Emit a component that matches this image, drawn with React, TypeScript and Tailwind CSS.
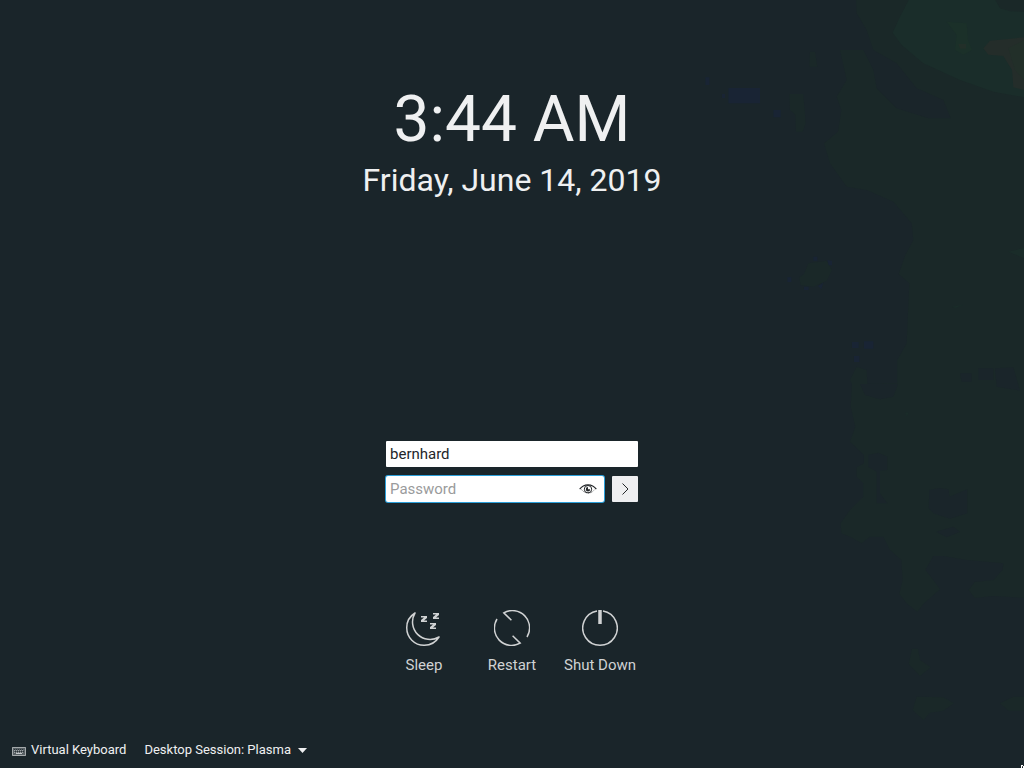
import type { ReactNode } from "react";

function Wallpaper() {
  return (
    <svg
      className="pointer-events-none absolute inset-0 h-full w-full"
      viewBox="0 0 1024 768"
      preserveAspectRatio="xMaxYMin slice"
      aria-hidden="true"
    >
      <g transform="translate(680 0) scale(0.33333)">
        <path
          fill="#1a2828"
          d="M528 0H1032V1794L940 1788L884 1794L866 1770L884 1746L940 1740L968 1710L970 1690L860 1680L790 1668H760L736 1710L760 1740L780 1768L730 1812L712 1836L680 1810L658 1782L668 1740L664 1680L630 1650L610 1610H570L545 1630L510 1610L484 1600L482 1570L510 1530L550 1490V1450L530 1430V1402L552 1390V1365L510 1325L526 1280L512 1220L516 1152L510 1140L530 1100L560 1110L562 1152L652 1150V1080L680 1030L688 850L656 822L676 765L700 720L695 670L640 605L560 570L500 560L450 490L432 430L474 395L484 330L470 290L500 240L480 150L550 150L580 210L590 265L650 325L745 355L812 355L790 300L710 265L650 190L580 150L560 90L530 40Z"
        />
        <path fill="#1a2d2a" d="M686 0H946L960 25L990 34L1032 35V292L940 275L840 240L730 190L665 135L638 98L660 50Z" />
        <path fill="#1b3029" d="M800 65L860 70L864 120L876 150L850 164L825 150L830 105Z" />
        <path fill="#242d2a" d="M910 145L930 122L1032 112V270L1000 262L996 210L970 168L925 164Z" />
        <path fill="#222f29" d="M985 145L1032 120V240L1005 210ZM835 132H858V146H840Z" />
        <path
          fill="#1a2828"
          d="M390 155H405L412 200H388ZM328 282H370L377 370L368 395H348L346 345L330 330ZM358 832L372 822L385 790L440 782L456 810L440 842L400 860L362 856ZM696 1946H714L720 1980L752 2002L720 2028L686 1992ZM710 2090L790 2092L822 2110L790 2132L750 2138L730 2160L698 2130ZM960 2110L1000 2090H1032V2132H985Z"
        />
        <path
          fill="#1a252a"
          d="M540 1152H654L640 1190L600 1198L555 1185ZM840 1120H875V1145H845ZM895 1105H940V1140H895ZM945 1105L1000 1102L1020 1172L950 1160ZM565 1365L595 1358L622 1370V1410L600 1412V1480L622 1510H590V1415L565 1400ZM748 1470L780 1464L806 1468L808 1490L862 1468V1540L810 1556L760 1540L746 1525ZM768 1595L820 1580L840 1595L800 1612Z"
        />
        <path
          fill="#192434"
          d="M145 264H240V310H145ZM280 330H302V352H280ZM76 232H88V255H76ZM126 282H135V294H126ZM400 770H412V782H400ZM442 780L456 782V796H446ZM372 860H386V870H372ZM414 858L430 848L424 868ZM322 832H334V846H322ZM516 1026H536V1044H516ZM552 1024H580V1046H552ZM522 1068H538V1086H522Z"
        />
        <path fill="#1a2c29" d="M985 755L1032 744V775ZM815 920L850 914L826 924ZM676 1238H686L680 1250Z" />
      </g>
    </svg>
  );
}

function SleepIcon() {
  return (
    <svg width="36" height="36" viewBox="0 0 36 36" fill="none" stroke="currentColor" strokeWidth="1.5" aria-hidden="true">
      <path
        strokeLinejoin="round"
        d="M9 3A17.400 17.400 0 0 0 .75 18A17.250 17.250 0 0 0 18 35.250A17.400 17.400 0 0 0 33 27A17.500 17.500 0 0 1 9 3Z"
      />
      <path
        fill="currentColor"
        stroke="none"
        d="M15 6h6v2l-3 2.500h3v1.500h-6v-2l3-2.500h-3ZM27 3h6v2l-3 2.500h3v1.500h-6v-2l3-2.500h-3ZM24 13h6v2l-3 2.500h3v1.500h-6v-2l3-2.500h-3Z"
      />
    </svg>
  );
}

function RestartIcon() {
  return (
    <svg width="36" height="36" viewBox="0 0 36 36" fill="none" stroke="currentColor" strokeWidth="1.5" aria-hidden="true">
      <path d="M3 9A17.300 17.300 0 0 0 26.200 33.200L18.600 25.800" />
      <path d="M33 27A17.300 17.300 0 0 0 9.800 2.800L17.400 10.200" />
    </svg>
  );
}

function PowerIcon() {
  return (
    <svg width="36" height="36" viewBox="0 0 36 36" fill="none" stroke="currentColor" aria-hidden="true">
      <path strokeWidth="1.500" d="M15 1A17.250 17.250 0 1 0 21 1" />
      <path strokeWidth="3.500" d="M18 0V14" />
    </svg>
  );
}

function EyeIcon() {
  return (
    <svg width="18" height="12" viewBox="0 0 18 12" fill="none" stroke="#232629" aria-hidden="true">
      <path strokeWidth="1.200" d="M.7 6.200C4.800.3 13.200.3 17.300 6.200" />
      <circle cx="9" cy="6.200" r="3.700" strokeWidth="1" />
      <path fill="#232629" stroke="none" d="M9 4a2.200 2.200 0 1 0 2.200 2.200H9Z" />
      <path strokeWidth=".6" d="M2.500 6.500Q5 9.800 9 10T15.500 6.500" strokeDasharray="1.500 1" />
    </svg>
  );
}

function KeyboardIcon() {
  return (
    <svg width="14" height="9" viewBox="0 0 14 9" aria-hidden="true">
      <path fill="#596165" d="M0 0H14V9H0Z" />
      <path fill="none" stroke="#a4a9ab" d="M.5.5H13.500V8.500H.5Z" />
      <path stroke="#2a3439" strokeDasharray="1 1" d="M2 2.500H12M3 4.500H12" />
      <path stroke="#9da2a5" strokeDasharray="1 1" d="M2 3.500H12M2 5.500H12" />
      <path stroke="#c4c8ca" d="M4 6.500H10" />
    </svg>
  );
}

function ActionButton({ label, icon }: { label: string; icon: ReactNode }) {
  return (
    <button type="button" className="flex w-22 flex-col items-center gap-[9px] text-[15px] leading-5 text-[#d0d2d3]">
      {icon}
      <span className="whitespace-nowrap">{label}</span>
    </button>
  );
}

export default function App() {
  return (
    <div className="relative flex min-h-screen flex-col overflow-hidden bg-[#1a252a] font-[Roboto,sans-serif] text-[#eff0f1]">
      <Wallpaper />
      <header className="relative pt-20 text-center">
        <h1 className="text-[64px] leading-20">3:44 AM</h1>
        <p className="text-[32px] leading-10">Friday, June 14, 2019</p>
      </header>

      <main className="relative mt-auto flex flex-col items-center">
        <form className="flex w-[252px] flex-col gap-[9px] text-[15px]" onSubmit={(event) => event.preventDefault()}>
          <input
            type="text"
            aria-label="Username"
            defaultValue="bernhard"
            className="h-[26px] w-full rounded-[1px] bg-white px-1 text-[#232629] outline-none"
          />
          <div className="flex gap-2">
            <div className="flex h-[26px] min-w-0 flex-1 items-center rounded-[2px] bg-white pr-[7px] ring-1 ring-[#2b9fd9]">
              <input
                type="password"
                aria-label="Password"
                placeholder="Password"
                className="h-full min-w-0 flex-1 bg-transparent px-1 text-[#232629] outline-none placeholder:text-[#9a9b9c]"
              />
              <button type="button" aria-label="Show password">
                <EyeIcon />
              </button>
            </div>
            <button
              type="submit"
              aria-label="Log in"
              className="flex size-[26px] items-center justify-center rounded-[1px] bg-[#eeeef0]"
            >
              <svg width="8" height="12" viewBox="0 0 8 12" fill="none" stroke="#232629" aria-hidden="true">
                <path d="M1.500 .5L7 6L1.500 11.500" />
              </svg>
            </button>
          </div>
        </form>

        <div className="mt-27 flex">
          <ActionButton label="Sleep" icon={<SleepIcon />} />
          <ActionButton label="Restart" icon={<RestartIcon />} />
          <ActionButton label="Shut Down" icon={<PowerIcon />} />
        </div>
      </main>

      <footer className="relative mt-[65px] flex gap-[18px] px-3 pb-2 text-[13px] leading-5">
        <button type="button" className="flex items-center gap-[5px]">
          <span className="pt-0.5">
            <KeyboardIcon />
          </span>
          Virtual Keyboard
        </button>
        <button type="button" className="flex items-center gap-[7px]">
          Desktop Session: Plasma
          <svg width="9" height="5" viewBox="0 0 9 5" fill="currentColor" aria-hidden="true">
            <path d="M0 0H9L4.500 5Z" />
          </svg>
        </button>
      </footer>

      <svg className="absolute right-0 bottom-0" width="3" height="3" viewBox="0 0 3 3" aria-hidden="true">
        <path fill="#fff" d="M0 0H2V1H3V3H2V2H1V3H0Z" />
        <path fill="#555" d="M1 1H2V2H1Z" />
      </svg>
    </div>
  );
}
